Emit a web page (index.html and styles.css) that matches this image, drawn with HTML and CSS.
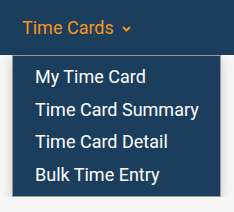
FILE: index.html
```html
<!DOCTYPE html>
<html lang="en">
<head>
  <meta charset="UTF-8" />
  <title>Time Cards</title>
  <link rel="stylesheet" href="styles.css">
</head>
<body>
  <header class="topbar">
    <a href="#" class="menu-toggle">Time Cards
      <svg class="caret" width="9" height="6" viewBox="0 0 9 6"><path d="M1 1l3.5 3.5L8 1" fill="none" stroke="#f7941d" stroke-width="2"/></svg>
    </a>
  </header>
  <div class="page">
    <nav class="dropdown">
      <a href="#">My Time Card</a>
      <a href="#">Time Card Summary</a>
      <a href="#">Time Card Detail</a>
      <a href="#">Bulk Time Entry</a>
    </nav>
  </div>
</body>
</html>
```

FILE: styles.css
```css
body {
  margin: 0;
  font-family: Roboto, "Liberation Sans", sans-serif;
  background-color: #f7f7f7;
}
.topbar {
  background-color: #1b3e5d;
  height: 55px;
  display: flex;
  align-items: center;
  padding-left: 22px;
}
.menu-toggle {
  color: #f7941d;
  font-size: 18px;
  text-decoration: none;
  display: flex;
  align-items: center;
  gap: 8px;
}
.caret {
  margin-top: 3px;
}
.page {
  padding: 0 13px 0 12px;
}
.dropdown {
  background-color: #1b3e5d;
  border: 1px solid #999;
  box-shadow: 0 4px 12px rgba(0,0,0,0.2);
  padding: 5px 0 4px 22px;
  display: flex;
  flex-direction: column;
}
.dropdown a {
  color: #fff;
  font-size: 18px;
  text-decoration: none;
  line-height: 32.7px;
}
```
